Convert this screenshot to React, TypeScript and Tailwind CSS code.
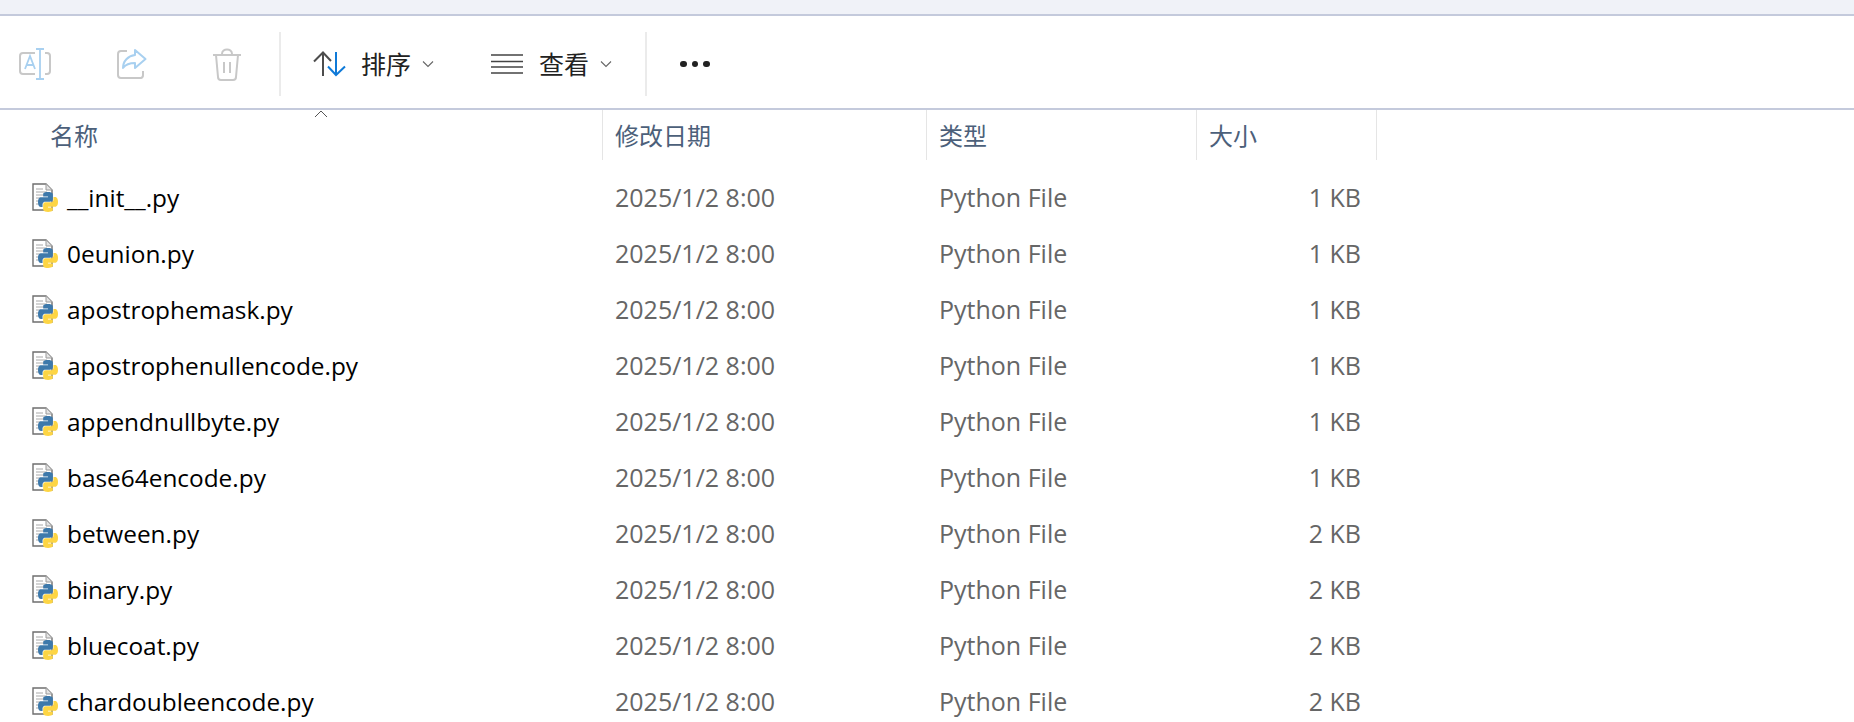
const FONT = "font-['Open_Sans','Noto_Sans_CJK_SC',sans-serif]";

const FILES = [
  { name: "__init__.py", size: "1 KB" },
  { name: "0eunion.py", size: "1 KB" },
  { name: "apostrophemask.py", size: "1 KB" },
  { name: "apostrophenullencode.py", size: "1 KB" },
  { name: "appendnullbyte.py", size: "1 KB" },
  { name: "base64encode.py", size: "1 KB" },
  { name: "between.py", size: "2 KB" },
  { name: "binary.py", size: "2 KB" },
  { name: "bluecoat.py", size: "2 KB" },
  { name: "chardoubleencode.py", size: "2 KB" },
];

const SNAKE =
  "M54.900 0C26.800 0 28.600 12.200 28.600 12.200v12.600h26.800v3.800H17.900S0 26.500 0 54.900s15.700 27.400 15.700 27.400h9.400V69.100s-.5-15.700 15.400-15.700h26.600s14.900.2 14.900-14.400V14.900S84.300 0 54.900 0z";

function PyFileIcon() {
  return (
    <svg width="27" height="29" viewBox="0 0 27 29" className="shrink-0">
      <path d="M1 1h13l6 6v20H1z" fill="#fff" stroke="#6f6f6f" strokeWidth="1.400" />
      <path d="M14 1v6h6" fill="#e4e4e4" stroke="#9a9a9a" strokeWidth="1" />
      <path d="M4 6h7M4 9h11M4 12h10M4 15h4M4 18h3M4 21h3" stroke="#a8a8a8" strokeWidth="1" />
      <svg x="6" y="9" width="20" height="20" viewBox="0 0 110.400 110.400">
        <path d={SNAKE} fill="#3d79ab" />
        <path d={SNAKE} fill="#fdd544" transform="rotate(180 55.200 55.200)" />
      </svg>
    </svg>
  );
}

function Chevron() {
  return (
    <svg width="12" height="8" viewBox="0 0 12 8">
      <path d="M1 1.500l5 5 5-5" fill="none" stroke="#666" strokeWidth="1.100" />
    </svg>
  );
}

function Separator() {
  return <div className="w-[2px] h-[64px] bg-[#ebebeb] shrink-0" />;
}

function Toolbar() {
  return (
    <div className="flex items-center h-[92px] pt-[4px] bg-white">
      {/* rename */}
      <svg width="34" height="34" viewBox="0 0 34 34" className="ml-[18px] shrink-0">
        <path d="M17 6H5a3 3 0 0 0-3 3v15a3 3 0 0 0 3 3h12M27 6h2a3 3 0 0 1 3 3v15a3 3 0 0 1-3 3h-2" fill="none" stroke="#c8c8c8" strokeWidth="2" />
        <path d="M22 2v30M18 2h8M18 32h8" stroke="#a8d0f0" strokeWidth="1.800" fill="none" />
        <path d="M7 22l5-13 5 13M8.500 18h7" stroke="#a8d0f0" strokeWidth="1.800" fill="none" />
      </svg>
      {/* share */}
      <svg width="32" height="32" viewBox="0 0 32 32" className="ml-[64px] shrink-0">
        <path d="M11 3H5a3 3 0 0 0-3 3v21a3 3 0 0 0 3 3h20a3 3 0 0 0 2-3v-4" fill="none" stroke="#c8c8c8" strokeWidth="2" />
        <path d="M19 2l10.500 9L19 20v-5c-5 0-9 1-12 5 0-7 5-12 12-13z" fill="none" stroke="#a8d0f0" strokeWidth="2" strokeLinejoin="round" />
      </svg>
      {/* trash */}
      <svg width="30" height="33" viewBox="0 0 30 33" className="ml-[64px] shrink-0">
        <path d="M1 7h28M10 6c0-6 10-6 10 0M4 7l2 22a3 3 0 0 0 3 3h12a3 3 0 0 0 3-3l2-22M12 14v11M18 14v11" fill="none" stroke="#c8c8c8" strokeWidth="2" />
      </svg>
      <div className="ml-[37px]">
        <Separator />
      </div>
      {/* sort */}
      <svg width="33" height="26" viewBox="0 0 33 26" className="ml-[32px] shrink-0">
        <path d="M10 25V2M1 10.500L10 1.500l8 8.500" fill="none" stroke="#4d4d4d" strokeWidth="2" />
        <path d="M23 1v23M15 15.500l8 8.500 9-8.500" fill="none" stroke="#0f7ad8" strokeWidth="2" />
      </svg>
      <span className={`${FONT} ml-[15px] mt-[2px] w-[50px] text-[25px] text-[#222] whitespace-nowrap`}>排序</span>
      <div className="ml-[11px] flex">
        <Chevron />
      </div>
      {/* view */}
      <svg width="32" height="20" viewBox="0 0 32 20" className="ml-[57px] shrink-0">
        <path d="M0 1h32M0 7.500h32M0 13h32M0 19h32" stroke="#444" strokeWidth="1.600" />
      </svg>
      <span className={`${FONT} ml-[16px] mt-[2px] w-[50px] text-[25px] text-[#222] whitespace-nowrap`}>查看</span>
      <div className="ml-[11px] flex">
        <Chevron />
      </div>
      <div className="ml-[33px]">
        <Separator />
      </div>
      <div className="ml-[33px] flex gap-[5px]">
        <div className="size-[6.500px] rounded-full bg-[#222]" />
        <div className="size-[6.500px] rounded-full bg-[#222]" />
        <div className="size-[6.500px] rounded-full bg-[#222]" />
      </div>
    </div>
  );
}

function HeaderCell({ label, width }: { label: string; width: string }) {
  return (
    <div className={`${width} h-[50px] flex items-center pl-[12px] pt-[2px] border-r border-[#e5e5e5] shrink-0`}>
      <span className={`${FONT} text-[24px] text-[#4c607a] whitespace-nowrap`}>{label}</span>
    </div>
  );
}

export default function App() {
  return (
    <div className={`${FONT} w-[1854px] h-[722px] overflow-hidden bg-white`}>
      <div className="h-[14px] bg-[#f0f2f8]" />
      <div className="h-[2px] bg-[#c4cadc]" />
      <Toolbar />
      <div className="h-[2px] bg-[#c4cadc]" />
      <div className="relative flex">
        <svg width="14" height="8" viewBox="0 0 14 8" className="absolute left-[314px] top-0">
          <path d="M1 7l6-6 6 6" fill="none" stroke="#555" strokeWidth="1" />
        </svg>
        <div className="w-[603px] h-[50px] flex items-center pl-[50px] pt-[2px] border-r border-[#e5e5e5] shrink-0">
          <span className="text-[24px] text-[#4c607a]">名称</span>
        </div>
        <HeaderCell label="修改日期" width="w-[324px]" />
        <HeaderCell label="类型" width="w-[270px]" />
        <HeaderCell label="大小" width="w-[180px]" />
      </div>
      <div className="pt-[10px]">
        {FILES.map((file) => (
          <div key={file.name} className="flex items-center h-[56px]">
            <div className="w-[603px] pl-[32px] flex items-center gap-[8px] shrink-0 text-[24.400px] text-black whitespace-nowrap">
              <PyFileIcon />
              <span>{file.name}</span>
            </div>
            <div className="w-[324px] pl-[12px] shrink-0 text-[25px] text-[#666] whitespace-nowrap">2025/1/2 8:00</div>
            <div className="w-[270px] pl-[12px] shrink-0 text-[25px] text-[#666] whitespace-nowrap">Python File</div>
            <div className="w-[164px] text-right shrink-0 text-[25px] text-[#666] whitespace-nowrap">{file.size}</div>
          </div>
        ))}
      </div>
    </div>
  );
}
